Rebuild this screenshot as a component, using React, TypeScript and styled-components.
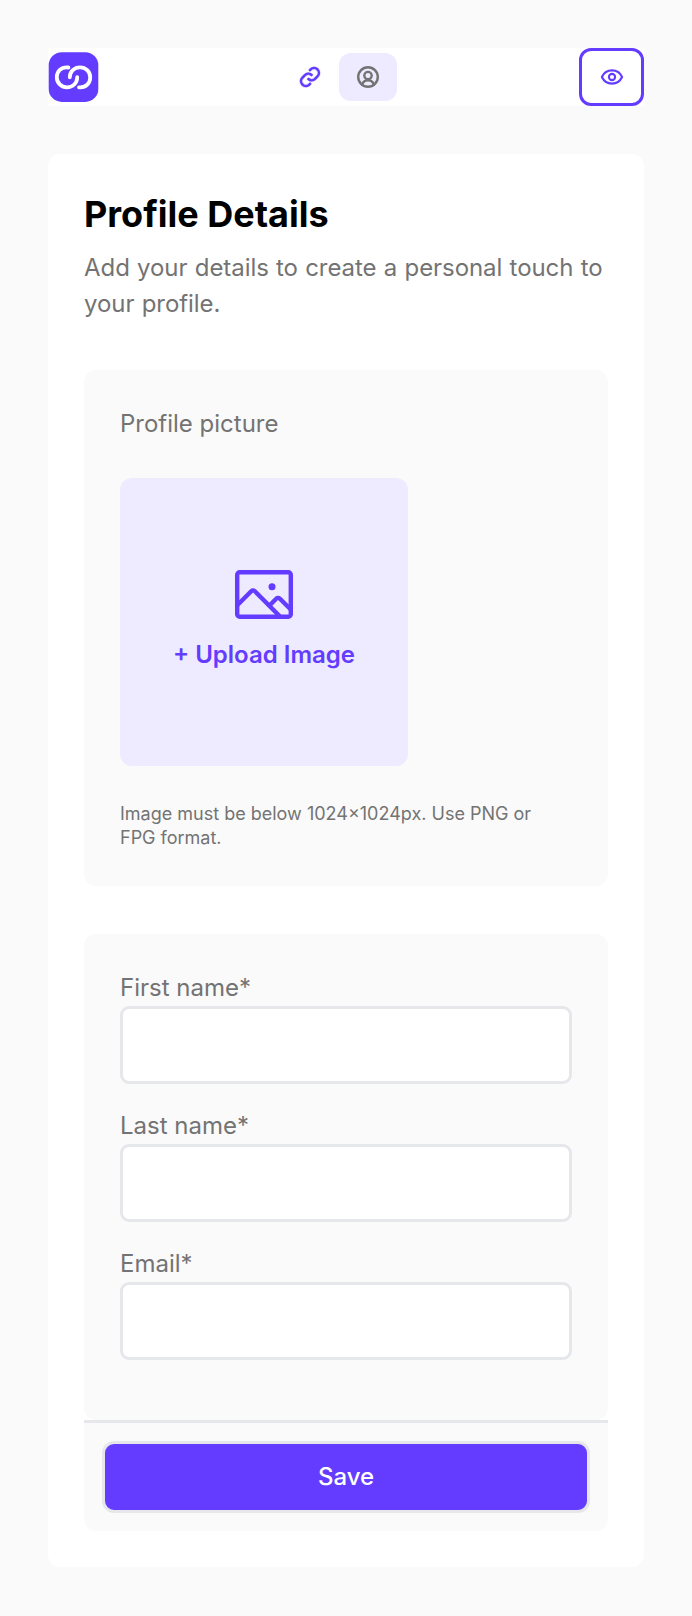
import React from 'react';
import styled, { createGlobalStyle } from 'styled-components';

const purple = '#633cff';
const lavender = '#eeeaff';
const grey = '#737373';
const line = '#e5e7eb';
const soft = '#fafafa';

const GlobalStyle = createGlobalStyle`
  *, *::before, *::after { box-sizing: border-box; }
  body {
    margin: 0;
    background: ${soft};
    font-family: Inter, "Liberation Sans", sans-serif;
    font-size: 24px;
    line-height: 36px;
    color: ${grey};
  }
  h1, p { margin: 0; }
`;

const Page = styled.div`
  display: flex;
  flex-direction: column;
  gap: 48px;
  min-height: 1616px;
  padding: 48px 48px 49px;
`;

const NavBar = styled.nav`
  display: flex;
  align-items: center;
  justify-content: space-between;
  height: 58px;
  background: #fff;
`;

const Logo = styled.svg`
  display: block;
  width: 51px;
  height: 51px;
`;

const Tabs = styled.div`
  display: flex;
`;

const Tab = styled.a<{ $active?: boolean }>`
  display: flex;
  align-items: center;
  justify-content: center;
  width: 58px;
  height: 48px;
  border-radius: 12px;
  color: ${(p) => (p.$active ? grey : purple)};
  background: ${(p) => (p.$active ? lavender : 'transparent')};
`;

const PreviewButton = styled.button`
  display: flex;
  align-items: center;
  justify-content: center;
  width: 65px;
  height: 58px;
  padding: 0;
  border: 3px solid ${purple};
  border-radius: 12px;
  background: #fff;
  color: ${purple};
`;

const Icon = styled.svg<{ $size: number }>`
  display: block;
  flex: none;
  width: ${(p) => p.$size}px;
  height: ${(p) => p.$size}px;
  fill: none;
  stroke: currentColor;
  stroke-linecap: round;
  stroke-linejoin: round;
`;

const Card = styled.main`
  padding: 36px;
  border-radius: 12px;
  background: #fff;
`;

const Title = styled.h1`
  font-size: 36px;
  line-height: 48px;
  font-weight: 700;
  color: #000;
`;

const Intro = styled.p`
  margin-top: 12px;
  letter-spacing: -0.06px;
  word-spacing: 0.6px;
`;

const Panel = styled.section`
  margin-top: 48px;
  padding: 36px;
  border-radius: 12px;
  background: ${soft};
`;

const UploadBox = styled.button`
  display: flex;
  flex-direction: column;
  align-items: center;
  justify-content: center;
  gap: 13px;
  width: 288px;
  height: 288px;
  margin: 36px 0;
  padding: 0 0 7px;
  border: 0;
  border-radius: 12px;
  background: ${lavender};
  color: ${purple};
  font: inherit;
  font-weight: 600;
`;

const Hint = styled.p`
  max-width: 440px;
  font-size: 18px;
  line-height: 24px;
`;

const Fields = styled(Panel)`
  display: flex;
  flex-direction: column;
  gap: 24px;
  padding-bottom: 60px;
`;

const Field = styled.label`
  display: flex;
  flex-direction: column;
`;

const TextInput = styled.input`
  width: 100%;
  height: 78px;
  padding: 0 24px;
  border: 3px solid ${line};
  border-radius: 9px;
  background: #fff;
  font: inherit;
  outline: none;
`;

const Footer = styled.div`
  padding: 18px;
  border-top: 3px solid ${line};
  border-radius: 0 0 12px 12px;
  background: ${soft};
`;

const SaveButton = styled.button`
  display: block;
  width: 100%;
  height: 72px;
  padding: 0;
  border: 3px solid ${line};
  border-radius: 12px;
  background: ${purple};
  color: #fff;
  font: inherit;
  font-weight: 500;
`;

const fieldLabels = ['First name*', 'Last name*', 'Email*'];

export default function App() {
  return (
    <>
      <GlobalStyle />
      <Page>
        <NavBar>
          <Logo viewBox="0 0 51 51">
            <rect x="0.7" y="0.3" width="49.6" height="49.6" rx="13" fill={purple} />
            <g fill="none" stroke="#fff" strokeWidth="3.8" strokeLinecap="round">
              <path d="M20.4 15.5C13 14.5 8.8 19.600 8.800 25.200c0 5.700 4.500 10.200 10.200 10.200S29.200 31 29.200 25.200" />
              <path d="M31 35.300c7.200.800 11.200-4.500 11.200-9.900 0-5.700-4.500-10.100-10.200-10.100S21.800 19.600 21.800 25.300" />
            </g>
          </Logo>
          <Tabs>
            <Tab aria-label="Links">
              <Icon $size={26} viewBox="0 0 16 16">
                <path
                  fill="currentColor"
                  strokeWidth="0.2"
                  d="M8.523 11.72a.749.749 0 0 1 0 1.063l-.371.371A3.751 3.751 0 1 1 2.847 7.85l1.507-1.506A3.75 3.75 0 0 1 9.5 6.188a.753.753 0 0 1-1 1.125 2.25 2.25 0 0 0-3.086.091L3.908 8.909a2.25 2.25 0 1 0 3.183 3.183l.37-.371a.748.748 0 0 1 1.062 0Zm4.63-8.874a3.756 3.756 0 0 0-5.305 0l-.371.37A.751.751 0 1 0 8.539 4.28l.372-.37a2.25 2.25 0 0 1 3.182 3.182l-1.507 1.507a2.25 2.25 0 0 1-3.086.09.753.753 0 0 0-1 1.125 3.75 3.75 0 0 0 5.144-.152l1.507-1.507a3.756 3.756 0 0 0 .002-5.307Z"
                />
              </Icon>
            </Tab>
            <Tab $active aria-label="Profile details">
              <Icon $size={24} viewBox="0 0 24 24" strokeWidth="2.4">
                <circle cx="12" cy="12" r="9.8" />
                <circle cx="12" cy="10.6" r="3.700" />
                <path d="M6 19.400c1.200-2.700 3.300-4.200 6-4.200s4.800 1.500 6 4.200" />
              </Icon>
            </Tab>
          </Tabs>
          <PreviewButton aria-label="Preview">
            <Icon $size={24} viewBox="0 0 24 24" strokeWidth="2.1">
              <path d="M1.900 12c2-4.300 5.600-6.600 10.100-6.600S20.100 7.700 22.100 12c-2 4.300-5.600 6.600-10.100 6.600S3.900 16.300 1.900 12Z" />
              <circle cx="12" cy="12" r="3.100" />
            </Icon>
          </PreviewButton>
        </NavBar>

        <Card>
          <Title>Profile Details</Title>
          <Intro>Add your details to create a personal touch to your profile.</Intro>

          <Panel>
            <p>Profile picture</p>
            <UploadBox>
              <Icon $size={60} viewBox="0 0 60 60" strokeWidth="4.4">
                <rect x="3.200" y="8.200" width="53.600" height="44.600" rx="2.500" />
                <path d="M3.500 41 17.200 27.300a2.600 2.600 0 0 1 3.700 0L46 52.500" />
                <path d="M35.500 41.500l6.700-6.700a2.600 2.600 0 0 1 3.700 0L56.500 45.300" />
                <circle cx="38" cy="22.800" r="3.500" fill="currentColor" stroke="none" />
              </Icon>
              + Upload Image
            </UploadBox>
            <Hint>Image must be below 1024×1024px. Use PNG or FPG format.</Hint>
          </Panel>

          <Fields>
            {fieldLabels.map((label) => (
              <Field key={label}>
                {label}
                <TextInput />
              </Field>
            ))}
          </Fields>
          <Footer>
            <SaveButton>Save</SaveButton>
          </Footer>
        </Card>
      </Page>
    </>
  );
}
